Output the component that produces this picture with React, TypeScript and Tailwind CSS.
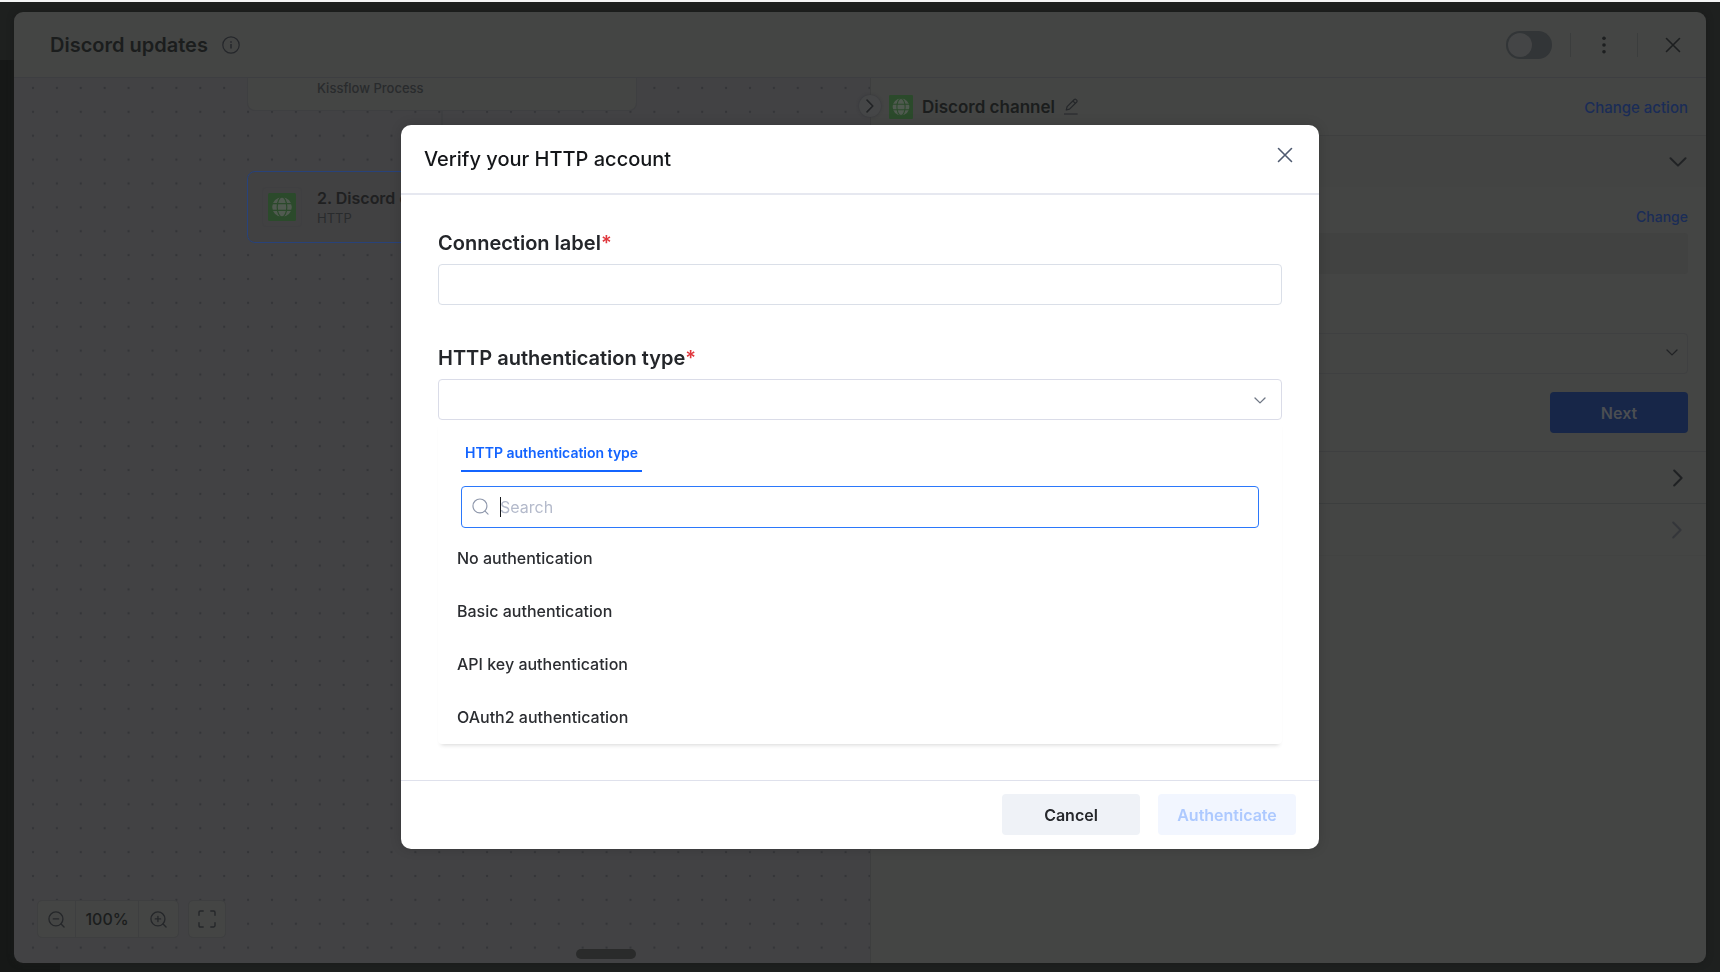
import type { ReactNode } from "react";

const AUTH_TYPES = [
  "No authentication",
  "Basic authentication",
  "API key authentication",
  "OAuth2 authentication",
];

type IconProps = { className?: string };

function CloseIcon({ className }: IconProps) {
  return (
    <svg viewBox="0 0 16 16" className={className} fill="none" stroke="currentColor" strokeWidth="1.6" strokeLinecap="round" aria-hidden="true">
      <path d="M1.5 1.5l13 13M14.5 1.5l-13 13" />
    </svg>
  );
}

function ChevronDown({ className }: IconProps) {
  return (
    <svg viewBox="0 0 18 10" className={className} fill="none" stroke="currentColor" strokeWidth="2" strokeLinecap="round" strokeLinejoin="round" aria-hidden="true">
      <path d="M1.5 1.2L9 8.6l7.5-7.4" />
    </svg>
  );
}

function ChevronRight({ className }: IconProps) {
  return (
    <svg viewBox="0 0 10 18" className={className} fill="none" stroke="currentColor" strokeWidth="2" strokeLinecap="round" strokeLinejoin="round" aria-hidden="true">
      <path d="M1.2 1.5L8.6 9l-7.4 7.5" />
    </svg>
  );
}

function GlobeTile({ className }: IconProps) {
  return (
    <svg viewBox="0 0 28 28" className={className} aria-hidden="true">
      <rect width="28" height="28" rx="1.5" fill="#2b4a2b" />
      <circle cx="14" cy="14" r="9.8" fill="#505a50" />
      <g fill="none" stroke="#2b4a2b" strokeWidth="1.2">
        <ellipse cx="14" cy="14" rx="4.8" ry="10" />
        <path d="M4 10.7h20M4 17.3h20" />
      </g>
    </svg>
  );
}

function MagnifierIcon({ className, children }: IconProps & { children?: ReactNode }) {
  return (
    <svg viewBox="0 0 18 18" className={className} fill="none" stroke="currentColor" strokeLinecap="round" aria-hidden="true">
      <circle cx="8.4" cy="8.4" r="7.4" />
      <path d="M13.8 13.8l3.2 3.2" />
      {children}
    </svg>
  );
}

function DrawerHeader() {
  return (
    <header className="flex h-[66px] shrink-0 items-center justify-between border-b border-[#3d3e41] bg-[#444544] pr-[25px] pl-9">
      <div className="flex items-center gap-[14px]">
        <h1 className="text-[20px] leading-7 font-semibold text-[#1b1d1d]">Discord updates</h1>
        <svg viewBox="0 0 18 18" className="size-[18px] text-[#25272b]" fill="none" stroke="currentColor" strokeWidth="1.2" aria-hidden="true">
          <circle cx="9" cy="9" r="8.2" />
          <path d="M9 8v4.6" strokeWidth="1.5" />
          <path d="M9 5.2v1.5" strokeWidth="1.5" />
        </svg>
      </div>
      <div className="flex items-center">
        <label className="flex cursor-pointer items-center">
          <input type="checkbox" aria-label="Enable integration" className="peer sr-only" />
          <span className="flex h-7 w-[46px] items-center rounded-full bg-[#323537] p-[2px] peer-checked:justify-end">
            <span className="size-6 rounded-full bg-[#444546]" />
          </span>
        </label>
        <span className="ml-[18px] h-6 w-px bg-[#3b3d3d]" />
        <button type="button" aria-label="More options" className="mx-4 flex size-[34px] items-center justify-center text-[#1d1f20]">
          <svg viewBox="0 0 4 18" className="h-[18px] w-1" fill="currentColor" aria-hidden="true">
            <circle cx="2" cy="2.2" r="1.8" />
            <circle cx="2" cy="9" r="1.8" />
            <circle cx="2" cy="15.8" r="1.8" />
          </svg>
        </button>
        <span className="h-6 w-px bg-[#3b3d3d]" />
        <button type="button" aria-label="Close" className="ml-[27px] text-[#1d1f20]">
          <CloseIcon className="size-4" />
        </button>
      </div>
    </header>
  );
}

function Canvas() {
  return (
    <section aria-label="Flow canvas" className="relative min-w-0 basis-[857px] overflow-hidden border-r border-[#3d3e3e] bg-[#424244]">
      <svg className="absolute inset-0 size-full" aria-hidden="true">
        <defs>
          <pattern id="dots" x="7" y="-2" width="23.9" height="23.88" patternUnits="userSpaceOnUse">
            <circle cx="12" cy="12" r="1.2" fill="#343538" />
          </pattern>
        </defs>
        <rect width="100%" height="100%" fill="url(#dots)" />
        <path d="M428 33V94" stroke="#3b3c3e" />
      </svg>

      <div className="absolute top-0 left-[233px] flex h-[33px] w-[390px] rounded-b-lg border border-t-0 border-[#3e3f41] bg-[#444544] pl-[69px]">
        <span className="text-[13px] leading-5 font-medium text-[#292b2d]">Kissflow Process</span>
      </div>

      <div className="absolute top-[93px] left-[233px] flex h-[72px] w-[390px] items-center gap-[15px] rounded-lg border border-[#28427a] bg-[#414142] pl-[14px]">
        <span className="flex size-10 items-center justify-center rounded border border-[#3f3f41]">
          <GlobeTile className="size-7" />
        </span>
        <span className="flex flex-col pt-px">
          <span className="text-[16px] leading-5 font-semibold text-[#1f2021]">2. Discord channel</span>
          <span className="text-[13px] leading-5 text-[#292b2d]">HTTP</span>
        </span>
      </div>

      <div className="absolute bottom-[25px] left-[23px] flex gap-[9px] text-[#25272a]">
        <div className="flex h-[38px] divide-x divide-[#3e3f40] rounded-[5px] border border-[#3e3f40] bg-[#444544]">
          <button type="button" aria-label="Zoom out" className="flex w-[38px] items-center justify-center">
            <MagnifierIcon className="size-[17px] stroke-[1.4]">
              <path d="M5.6 8.4h5.6" />
            </MagnifierIcon>
          </button>
          <output className="flex w-[63px] items-center justify-center text-[16px] font-medium text-[#1b1d1d]">100%</output>
          <button type="button" aria-label="Zoom in" className="flex w-[39px] items-center justify-center">
            <MagnifierIcon className="size-[17px] stroke-[1.4]">
              <path d="M5.6 8.4h5.6M8.4 5.6v5.6" />
            </MagnifierIcon>
          </button>
        </div>
        <button type="button" aria-label="Fit to screen" className="flex size-[38px] items-center justify-center rounded-[5px] border border-[#3e3f40] bg-[#444544]">
          <svg viewBox="0 0 18 18" className="size-[18px]" fill="none" stroke="currentColor" strokeWidth="1.4" strokeLinecap="round" strokeLinejoin="round" aria-hidden="true">
            <path d="M1 5.2V2.4Q1 1 2.4 1h2.8M12.8 1h2.8Q17 1 17 2.4v2.8M17 12.8v2.8Q17 17 15.6 17h-2.8M5.2 17H2.4Q1 17 1 15.6v-2.8" />
          </svg>
        </button>
      </div>
      <span className="absolute bottom-1 left-[562px] h-[10px] w-[60px] rounded-[5px] bg-[#2a2b2b]" />
    </section>
  );
}

function ConfigPane() {
  return (
    <section aria-label="Step settings" className="relative min-w-[400px] flex-1 bg-[#444544]">
      <button type="button" aria-label="Collapse" className="absolute top-[17px] -left-[12px] flex size-[22px] items-center justify-center rounded-full bg-[#454647] text-[#212325] shadow-[0_0_3px_#35363a]">
        <ChevronRight className="h-[14px] w-2" />
      </button>
      <div className="flex h-[58px] items-center justify-between border-b border-[#3e3f3f] px-[18px]">
        <div className="flex items-center gap-[9px]">
          <GlobeTile className="size-6" />
          <h2 className="text-[17px] leading-6 font-semibold text-[#1b1d1d]">Discord channel</h2>
          <button type="button" aria-label="Rename" className="text-[#25272a]">
            <svg viewBox="0 0 14 17" className="h-[17px] w-[14px]" fill="none" stroke="currentColor" strokeWidth="1.2" strokeLinejoin="round" aria-hidden="true">
              <path d="M2.3 12l.8-3.3 7.2-7.2q.9-.7 1.8.1l.6.6q.8.9 0 1.8L5.5 11.2z" />
              <path d="M9 3l2.3 2.3" />
              <path d="M0 16h13.6" />
            </svg>
          </button>
        </div>
        <a href="#change-action" className="pt-[2px] text-[15px] leading-6 font-medium text-[#1a2c57]">Change action</a>
      </div>
      <div className="flex h-[51px] items-center justify-end bg-[#434443] pr-[19px]">
        <button type="button" aria-label="Collapse connection section" className="text-[#212325]">
          <ChevronDown className="h-[10px] w-[18px]" />
        </button>
      </div>
      <div className="flex flex-col px-[18px] pt-[18px]">
        <a href="#change" className="self-end text-[14px] leading-6 font-medium text-[#1a2c57]">Change</a>
        <div className="mt-1 h-[41px] rounded bg-[#414241]" />
        <div className="relative mt-[59px]">
          <select aria-label="Connection" className="block h-[41px] w-full appearance-none rounded border border-[#3f4041] bg-transparent px-3">
            <option value="" />
          </select>
          <ChevronDown className="pointer-events-none absolute top-4 right-[10px] h-[7px] w-3 text-[#212325]" />
        </div>
        <button type="button" className="mt-[18px] h-[41px] w-[138px] self-end rounded bg-[#172648] text-[16px] font-semibold text-[#4b4e52]">Next</button>
      </div>
      <div className="mt-[18px] flex h-[52px] items-center justify-end border-t border-[#3e3f40] pr-[23px]">
        <button type="button" aria-label="Expand mapping section" className="text-[#1f2123]">
          <ChevronRight className="h-[18px] w-[10px]" />
        </button>
      </div>
      <div className="flex h-[53px] items-center justify-end border-y border-t-[#3c3e3e] border-b-[#424342] pr-6">
        <button type="button" disabled aria-label="Expand test section" className="text-[#34363a]">
          <ChevronRight className="h-[18px] w-[10px]" />
        </button>
      </div>
    </section>
  );
}

function FieldLabel({ htmlFor, children }: { htmlFor: string; children: ReactNode }) {
  return (
    <label htmlFor={htmlFor} className="block text-[20px] leading-7 font-semibold text-[#24262a]">
      {children}
      <span className="text-[#e0383e]">*</span>
    </label>
  );
}

function VerifyDialog() {
  return (
    <div className="fixed inset-0 flex items-center justify-center pt-px">
      <div role="dialog" aria-modal="true" aria-labelledby="dialog-title" className="w-full max-w-[918px] rounded-[10px] bg-white shadow-[0_0_12px_rgba(0,0,0,0.15)]">
        <div className="flex h-[70px] items-center justify-between border-b-2 border-[#e6e8f0] pr-[26px] pl-[23px]">
          <h2 id="dialog-title" className="text-[20px] leading-7 font-medium text-[#141619]">Verify your HTTP account</h2>
          <button type="button" aria-label="Close dialog" className="mb-[7px] text-[#4f5a70]">
            <CloseIcon className="size-4" />
          </button>
        </div>

        <div className="px-[37px] pt-[34px] pb-9">
          <FieldLabel htmlFor="connection-label">Connection label</FieldLabel>
          <input id="connection-label" type="text" className="mt-[7px] block h-[41px] w-full rounded border border-[#dadfe8] px-3 text-[16px] outline-none" />

          <div className="mt-[39px]">
            <FieldLabel htmlFor="auth-type">HTTP authentication type</FieldLabel>
          </div>
          <div className="relative mt-[7px]">
            <select id="auth-type" className="block h-[41px] w-full appearance-none rounded border border-[#dadce8] bg-white px-3 text-[16px] outline-none">
              <option value="" />
            </select>
            <ChevronDown className="pointer-events-none absolute top-[18px] right-4 h-[7px] w-3 text-[#6f7785]" />
          </div>

          <div className="rounded-b bg-white pt-[21px] shadow-[0_4px_4px_-3px_rgba(0,0,0,0.16)]">
            <div className="px-[23px]">
              <button type="button" className="block border-b-2 border-[#1364ff] px-1 pb-[5px] text-[14px] leading-6 font-semibold text-[#1364ff]">
                HTTP authentication type
              </button>
              <div className="relative mt-[14px]">
                <MagnifierIcon className="absolute top-3 left-[11px] size-[17px] stroke-[1.2] text-[#8e97ab]" />
                <input type="search" aria-label="Search authentication types" placeholder="Search" className="block h-[42px] w-full rounded border border-[#2b78fb] pr-3 pl-[38px] text-[16px] outline-none placeholder:text-[#b4bacb]" />
                <span className="absolute top-[11px] left-[39px] h-5 w-px bg-[#16181c]" />
              </div>
            </div>
            <ul className="pt-1">
              {AUTH_TYPES.map((type) => (
                <li key={type}>
                  <button type="button" className="flex h-[53px] w-full items-center px-[19px] text-left text-[16px] font-medium text-[#2b2d31]">
                    {type}
                  </button>
                </li>
              ))}
            </ul>
          </div>
        </div>

        <div className="flex h-[69px] items-center justify-end gap-[18px] border-t border-[#dfe1ec] pr-[23px]">
          <button type="button" className="h-[41px] w-[138px] rounded bg-[#eff2f7] text-[16px] font-semibold text-[#26282c]">Cancel</button>
          <button type="button" disabled className="h-[41px] w-[138px] rounded bg-[#f2f6ff] text-[16px] font-semibold text-[#adc9ff]">Authenticate</button>
        </div>
      </div>
    </div>
  );
}

export default function App() {
  return (
    <main className="relative flex h-screen min-h-[900px] flex-col bg-[#1e201f] font-['Inter',sans-serif]">
      <div className="h-[2px] shrink-0 bg-[#f4f5f5]" />
      <div className="absolute top-[60px] bottom-0 left-0 w-[60px] bg-[#161817]" />
      <div className="relative mx-[14px] mt-[10px] mb-[9px] flex min-h-0 flex-1 flex-col overflow-hidden rounded-[9px] shadow-[0_0_6px_#1a1b1b]">
        <DrawerHeader />
        <div className="flex min-h-0 flex-1">
          <Canvas />
          <ConfigPane />
        </div>
      </div>
      <VerifyDialog />
    </main>
  );
}
